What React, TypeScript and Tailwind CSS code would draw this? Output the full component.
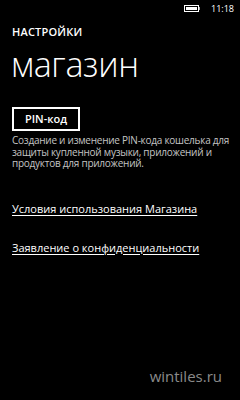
export default function App() {
  return (
    <div className="w-[240px] h-[400px] bg-black text-white overflow-hidden flex flex-col" style={{ fontFamily: '"Open Sans", "Noto Sans", sans-serif' }}>
      {/* status bar */}
      <div className="h-[15px] flex items-center justify-end pr-[6px] gap-[11px] pt-[1px]">
        <div className="flex items-center">
          <div className="w-[15px] h-[7px] border border-white p-[1px]">
            <div className="w-full h-full bg-white" />
          </div>
          <div className="w-[1px] h-[3px] bg-[#aaaaaa]" />
        </div>
        <span className="text-[9px] leading-none">11:18</span>
      </div>

      <div className="pl-[12px] pt-[10px]">
        <div className="text-[11px] leading-[13px] font-semibold tracking-[0.2px]">НАСТРОЙКИ</div>
        <div className="text-[34px] leading-[40px] font-light -ml-[1px] mt-[6px] tracking-[-0.3px]">магазин</div>
      </div>

      <div className="pl-[12px] pt-[23px] pr-[6px]">
        <div className="w-[68px] h-[24px] border-2 border-white flex items-center justify-center text-[11px] font-semibold">
          PIN-код
        </div>
        <p className="mt-[4px] text-[10px] leading-[11.5px] text-[#c4c4c4] tracking-[-0.25px]">
          Создание и изменение PIN-кода кошелька для защиты купленной музыки, приложений и продуктов для приложений.
        </p>

        <div className="mt-[32px] text-[11px] leading-[14px] underline underline-offset-[2px]">
          Условия использования Магазина
        </div>
        <div className="mt-[25px] text-[11px] leading-[14px] underline underline-offset-[2px]">
          Заявление о конфиденциальности
        </div>
      </div>

      <div className="mt-auto mb-[15px] pr-[18px] text-right text-[15px] leading-[18px] text-[#8a8a8a]">
        wintiles.ru
      </div>
    </div>
  );
}
